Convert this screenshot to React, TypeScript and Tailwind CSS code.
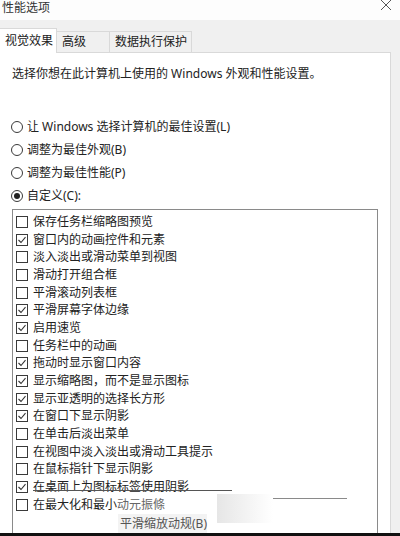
import React from "react";

const items: [string, boolean][] = [
  ["保存任务栏缩略图预览", false],
  ["窗口内的动画控件和元素", true],
  ["淡入淡出或滑动菜单到视图", false],
  ["滑动打开组合框", false],
  ["平滑滚动列表框", false],
  ["平滑屏幕字体边缘", true],
  ["启用速览", true],
  ["任务栏中的动画", false],
  ["拖动时显示窗口内容", true],
  ["显示缩略图，而不是显示图标", true],
  ["显示亚透明的选择长方形", true],
  ["在窗口下显示阴影", true],
  ["在单击后淡出菜单", false],
  ["在视图中淡入淡出或滑动工具提示", false],
  ["在鼠标指针下显示阴影", false],
  ["在桌面上为图标标签使用阴影", true],
];

function Check({ on }: { on: boolean }) {
  return (
    <div className="w-[12px] h-[12px] border border-[#3a3a3a] bg-white flex items-center justify-center shrink-0">
      {on && (
        <svg width="10" height="10" viewBox="0 0 10 10">
          <path d="M1.5 5 L4 7.5 L8.5 2.2" fill="none" stroke="#333" strokeWidth="1.1" />
        </svg>
      )}
    </div>
  );
}

function Radio({ on, label }: { on?: boolean; label: string }) {
  return (
    <div className="h-[23px] flex items-center pl-[11px]">
      <div className="w-[12px] h-[12px] rounded-full border border-[#3a3a3a] flex items-center justify-center shrink-0">
        {on && <div className="w-[6px] h-[6px] rounded-full bg-[#222]" />}
      </div>
      <span className="ml-[4px]">{label}</span>
    </div>
  );
}

export default function App() {
  return (
    <div
      className="relative w-[400px] h-[536px] overflow-hidden bg-[#f0f0f0] text-[12px] text-[#222] leading-[16px]"
      style={{ fontFamily: '"Noto Sans", "Noto Sans CJK SC", sans-serif' }}
    >
      {/* title bar */}
      <div className="h-[20px] bg-[#fdfdfd] flex items-start justify-between">
        <span className="ml-[2px] mt-[1px] text-[12px] leading-[14px] text-[#333]">性能选项</span>
        <svg className="mr-[8px] mt-[-1px]" width="12" height="12" viewBox="0 0 12 12">
          <path d="M1 1 L11 11 M11 1 L1 11" stroke="#555" strokeWidth="1" />
        </svg>
      </div>
      {/* tabs */}
      <div className="h-[32px] flex items-end">
        <div className="h-[25px] w-[58px] ml-[-1px] bg-white border border-[#d9d9d9] border-b-0 flex items-center pl-[5px] relative z-10 mb-[-1px]">
          视觉效果
        </div>
        <div className="h-[21px] w-[53px] border border-[#d9d9d9] border-l-0 border-b-0 flex items-center pl-[5px] bg-[#f0f0f0]">
          高级
        </div>
        <div className="h-[21px] w-[82px] border border-[#d9d9d9] border-l-0 border-b-0 flex items-center pl-[5px] bg-[#f0f0f0]">
          数据执行保护
        </div>
      </div>
      {/* panel */}
      <div className="w-[392px] ml-[-1px] h-[484px] bg-white border border-[#d9d9d9] flex flex-col">
        <div className="pl-[12px] pt-[13px]">选择你想在此计算机上使用的 Windows 外观和性能设置。</div>
        <div className="mt-[33px] flex flex-col">
          <Radio label="让 Windows 选择计算机的最佳设置(L)" />
          <Radio label="调整为最佳外观(B)" />
          <Radio label="调整为最佳性能(P)" />
          <Radio on label="自定义(C):" />
        </div>
        <div className="mt-[2px] ml-[12px] w-[366px] flex-1 border border-[#8a8a8a] border-b-0 pt-[3px] pl-[3px] flex flex-col">
          {items.map(([t, on]) => (
            <div key={t} className="h-[17.7px] flex items-center gap-[5px] shrink-0">
              <Check on={on} />
              <span className="whitespace-nowrap">{t}</span>
            </div>
          ))}
          <div className="h-[17.7px] flex items-center gap-[5px] shrink-0">
            <Check on={false} />
            <span className="whitespace-nowrap">
              在最大化和最小<span className="text-[#666]">动元振條</span>
            </span>
          </div>
        </div>
      </div>
      {/* overlay artifacts */}
      <div className="absolute left-[33px] top-[490px] w-[199px] h-[1px] bg-[#555]" />
      <div className="absolute left-[273px] top-[498px] w-[74px] h-[1px] bg-[#8a8a8a]" />
      <div className="absolute left-[217px] top-[494px] w-[56px] h-[29px] bg-gradient-to-r from-[#e6e6e6] to-transparent" />
      <div className="absolute left-[118px] top-[514px] w-[89px] h-[19px] bg-[#f3f3f3] flex items-center pl-[2px] text-[#555] text-[12px]">
        平滑缩放动规(B)
      </div>
      <div className="absolute left-0 bottom-0 w-[400px] h-[3px] bg-[#111]" />
    </div>
  );
}
